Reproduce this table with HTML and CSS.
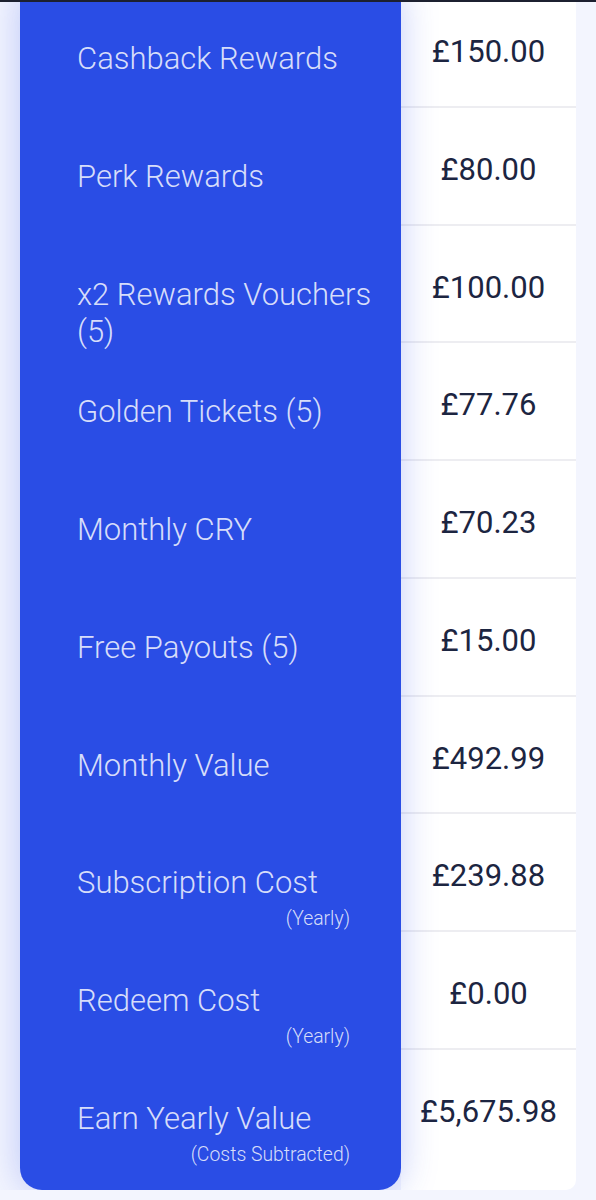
FILE: index.html
```html
<!DOCTYPE html>
<html lang="en">
<head>
    <meta charset="UTF-8">
    <title>Rewards Value</title>
    <link rel="stylesheet" href="styles.css">
</head>
<body>
    <div class="top-edge"></div>

    <div class="value-table">
        <div class="labels">
            <div class="label-cell">Cashback Rewards</div>
            <div class="label-cell">Perk Rewards</div>
            <div class="label-cell">x2 Rewards Vouchers (5)</div>
            <div class="label-cell">Golden Tickets (5)</div>
            <div class="label-cell">Monthly CRY</div>
            <div class="label-cell">Free Payouts (5)</div>
            <div class="label-cell">Monthly Value</div>
            <div class="label-cell">Subscription Cost<span class="note">(Yearly)</span></div>
            <div class="label-cell">Redeem Cost<span class="note">(Yearly)</span></div>
            <div class="label-cell">Earn Yearly Value<span class="note">(Costs Subtracted)</span></div>
        </div>

        <div class="amounts">
            <div class="amount-cell">£150.00</div>
            <div class="amount-cell">£80.00</div>
            <div class="amount-cell">£100.00</div>
            <div class="amount-cell">£77.76</div>
            <div class="amount-cell">£70.23</div>
            <div class="amount-cell">£15.00</div>
            <div class="amount-cell">£492.99</div>
            <div class="amount-cell">£239.88</div>
            <div class="amount-cell">£0.00</div>
            <div class="amount-cell last">£5,675.98</div>
        </div>
    </div>
</body>
</html>
```

FILE: styles.css
```css
body {
    margin: 0;
    background: #f3f5fe;
    font-family: Roboto, "Liberation Sans", sans-serif;
    overflow: hidden;
}

.top-edge {
    position: fixed;
    top: 0;
    left: 0;
    right: 0;
    height: 2px;
    background: #1c2030;
    z-index: 5;
}

.value-table {
    display: flex;
    margin: -10px 20px 0 20px;
}

.labels {
    position: relative;
    z-index: 1;
    width: 381px;
    background: #2a4de5;
    border-radius: 0 0 22px 22px;
    padding-bottom: 22px;
    box-shadow: 0 0 36px rgba(42, 77, 229, 0.28);
}

.label-cell {
    box-sizing: border-box;
    height: 117.75px;
    padding: 50px 14px 0 57px;
    color: rgba(255, 255, 255, 0.82);
    font-weight: 300;
    font-size: 31px;
    line-height: 37px;
}

.note {
    display: block;
    text-align: right;
    font-size: 19.4px;
    line-height: 36px;
    margin-right: 37px;
}

.amounts {
    width: 175px;
    background: #fff;
    border-radius: 0 0 10px 0;
    padding-bottom: 22px;
}

.amount-cell {
    box-sizing: border-box;
    height: 117.75px;
    padding-top: 43px;
    border-bottom: 2px solid #ededf1;
    text-align: center;
    color: #1c2541;
    font-size: 31px;
    line-height: 37px;
}

.amount-cell.last {
    border-bottom: none;
}
```
